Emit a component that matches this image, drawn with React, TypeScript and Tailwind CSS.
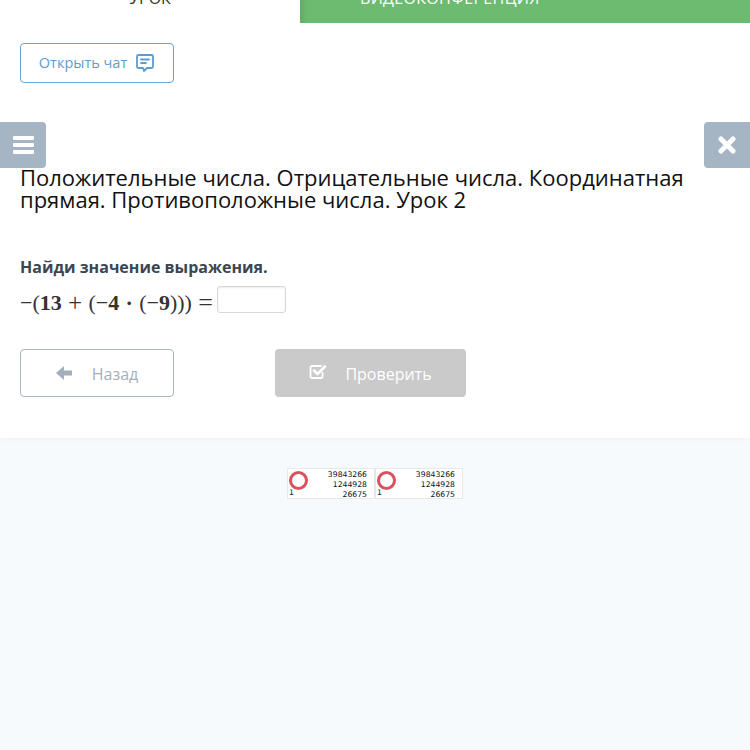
function Counter() {
    return (
        <div className="relative h-[31px] w-[88px] border border-[#e6e9ec] bg-white font-['DejaVu_Sans',sans-serif] text-[7.7px] leading-[10px] text-[#111]">
            <div className="absolute left-[1px] top-[2px] size-[19px] rounded-full border-[3px] border-[#d9535f]" />
            <div className="flex flex-col items-end pr-[7px] pt-[1px]">
                <span>39843266</span>
                <span>1244928</span>
                <span>26675</span>
            </div>
            <span className="absolute bottom-[0px] left-[1px]">1</span>
        </div>
    )
}

export default function App() {
    return (
        <div className="relative min-h-[750px] bg-[#f7fafc] font-['Open_Sans',sans-serif]">
            <div className="h-[438px] bg-white shadow-[0_1px_4px_rgba(0,0,0,0.04)]">
                <div className="flex h-[23px] overflow-hidden">
                    <div className="flex w-[300px] items-end justify-center pb-[15px] text-base leading-5 text-[#333]">УРОК</div>
                    <div className="flex flex-1 items-end bg-[#6dbb71] pb-[15px] pl-[60px] text-base leading-5 tracking-[0.3px] text-white shadow-[inset_8px_0_8px_-6px_rgba(0,0,0,0.12)]">
                        ВИДЕОКОНФЕРЕНЦИЯ
                    </div>
                </div>

                <div className="px-5">
                    <button className="mt-5 flex h-10 w-[154px] items-center justify-center gap-2 rounded border border-[#6ba4d0] bg-white text-[14.5px] text-[#5f9ccb]">
                        Открыть чат
                        <svg viewBox="0 0 20 20" className="size-[20px] fill-none stroke-[#5f9ccb]" strokeWidth={1.8} strokeLinejoin="round" strokeLinecap="round">
                            <path d="M3.5 2h13A1.5 1.5 0 0 1 18 3.5v10a1.5 1.5 0 0 1-1.5 1.5H12l-3 3-1-3H3.5A1.5 1.5 0 0 1 2 13.5v-10A1.5 1.5 0 0 1 3.5 2z" />
                            <path d="M6 6.5h8M6 10h5" />
                        </svg>
                    </button>

                    <h1 className="mt-[83px] text-[22px] leading-[22px] text-[#111]">
                        Положительные числа. Отрицательные числа. Координатная прямая. Противоположные числа. Урок 2
                    </h1>

                    <p className="mt-[46px] text-base font-bold leading-[22px] text-[#3c4650]">Найди значение выражения.</p>

                    <div className="mt-2 flex h-[29px] items-start">
                        <span className="mt-[5px] flex w-[193px] shrink-0 items-center justify-between font-['Liberation_Serif',serif] text-[22px] leading-6 whitespace-nowrap text-[#333]">
                            <span>−(<b className="font-semibold">13</b></span>
                            <span className="text-[25px]">+</span>
                            <span>(−<b className="font-semibold">4</b></span>
                            <span className="font-bold">·</span>
                            <span>(−<b className="font-semibold">9</b>)))</span>
                            <span className="text-[26px]">=</span>
                        </span>
                        <input className="ml-[4px] h-[27px] w-[69px] rounded-[3px] border border-[#d5d9dc] bg-white shadow-[inset_0_1px_2px_rgba(0,0,0,0.08)]" />
                    </div>

                    <div className="mt-[34px] flex gap-[100px]">
                        <button className="flex h-12 w-[154px] items-center justify-center gap-5 rounded border border-[#a9b6c1] bg-white pt-[2px] text-base text-[#a3b0bb]">
                            <svg viewBox="0 0 16 14" className="-mt-[3px] h-[14px] w-4 fill-[#a3b0bb]">
                                <path d="M8 0 0 7l8 7V9.5h8v-5H8z" />
                            </svg>
                            Назад
                        </button>
                        <button className="ml-[1px] flex h-12 w-[191px] items-center justify-center gap-[18px] rounded bg-[#cacaca] pt-[2px] text-base text-white">
                            <svg viewBox="0 0 18 16" className="-mt-[5px] h-4 w-[18px] fill-none stroke-white" strokeLinecap="round" strokeLinejoin="round">
                                <path d="M12 2H3a1.5 1.5 0 0 0-1.5 1.5v9A1.5 1.5 0 0 0 3 14h9a1.5 1.5 0 0 0 1.5-1.5V9" strokeWidth={1.8} />
                                <path d="M5 6.5l3.5 3.5L16 2.5" strokeWidth={2.6} />
                            </svg>
                            Проверить
                        </button>
                    </div>
                </div>
            </div>

            <div className="mt-[30px] flex justify-center">
                <Counter />
                <Counter />
            </div>

            <button className="absolute left-0 top-[122px] flex size-[46px] items-center justify-center rounded-r bg-[#a6b5c3]">
                <span className="flex w-[21px] flex-col gap-[3px]">
                    <span className="h-[4px] rounded-[1px] bg-white" />
                    <span className="h-[4px] rounded-[1px] bg-white" />
                    <span className="h-[4px] rounded-[1px] bg-white" />
                </span>
            </button>
            <button className="absolute right-0 top-[122px] flex size-[46px] items-center justify-center rounded-l bg-[#a6b5c3]">
                <svg viewBox="0 0 18 18" className="size-[18px] stroke-white" strokeWidth={5} strokeLinecap="round">
                    <path d="M3 3l12 12M15 3 3 15" />
                </svg>
            </button>
        </div>
    )
}
